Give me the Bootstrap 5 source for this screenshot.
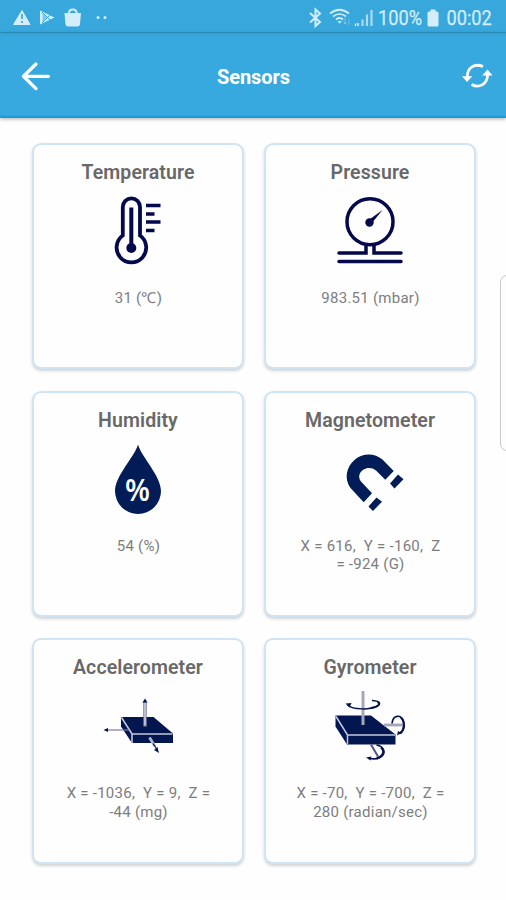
<!DOCTYPE html>
<html lang="en">
<head>
<meta charset="utf-8">
<meta name="viewport" content="width=device-width, initial-scale=1">
<title>Sensors</title>
<link href="https://cdn.jsdelivr.net/npm/bootstrap@5.3.0/dist/css/bootstrap.min.css" rel="stylesheet">
<style>
  body { font-family: Roboto, "Liberation Sans", sans-serif; background: #fefefe; width: 506px; height: 900px; }
  svg { display: block; flex: none; }
  .status-bar { height: 33px; background: #38a7dc; color: #d3edfa; padding: 2px 14px 0 12px; border-bottom: 1px solid #2f93c4; }
  .status-text { font-size: 20px; line-height: 32px; padding-top: 1px; -webkit-text-stroke: .25px #d3edfa; }
  .status-text span { display: inline-block; transform: scaleX(.91); }
  .scale-start { width: 46px; }
  .scale-start span { transform-origin: left; }
  .scale-end { width: 51px; }
  .scale-end span { transform-origin: right; }
  .app-bar { height: 85px; background: linear-gradient(#349fd2 0, #38a9de 4px, #38a9de 82px, #179bd6 84px); box-shadow: 0 1px 4px rgba(0,0,0,.32); padding: 0 13px 0 20px; }
  .app-title { font-size: 20px; font-weight: 700; color: #fff; letter-spacing: -.1px; padding: 2px 6px 0 0; }
  .sensor-grid { display: grid; grid-template-columns: 212px 212px; grid-auto-rows: 226px; column-gap: 20px; row-gap: 21.5px; padding: 25px 0 0 32px; }
  .sensor-card { border: 2.5px solid #cfe5f5; border-radius: 9px; box-shadow: 0 2px 3px rgba(70,80,90,.25); background: #fefefe; padding-top: 16px; }
  .sensor-name { font-size: 19.5px; line-height: 24px; font-weight: 600; letter-spacing: .1px; color: #686868; margin: 0 0 4px; }
  .sensor-value { font-size: 15px; line-height: 18.5px; letter-spacing: .25px; color: #7d7d7d; margin-top: 20px; padding-left: 1px; white-space: pre; }
  .edge-handle { top: 275px; left: 500px; width: 20px; height: 176px; border: 1.500px solid #c9c9c9; border-radius: 7px; background: #fdfdfd; }
</style>
</head>
<body class="position-relative overflow-hidden">
  <div class="status-bar d-flex align-items-center justify-content-between">
    <svg width="100" height="30" viewBox="12 2 100 30" fill="#d3edfa">
      <path d="M22 10.5 30 24.5H13.5Z" stroke="#d3edfa" stroke-linejoin="round"/><path d="M22 14v5M22 21v2" stroke="#38a7dc" stroke-width="1.7"/>
      <path d="M40 10.500v14l14.500-7Z"/><path d="M42.500 13v9L48 17.500Z" fill="#38a7dc" opacity=".5"/><path d="M42 12l8.500 8.500M42 23l8.500-8.500" stroke="#38a7dc" stroke-width="1" fill="none"/>
      <path d="M64.500 13h16.500l-1 11q-.3 2.500-2.500 2.500H68q-2.300 0-2.600-2.500Z"/><path d="M68.800 14q0-4.500 4-4.500t4 4.500" fill="none" stroke="#d3edfa" stroke-width="1.800"/>
      <circle cx="98" cy="17.500" r="1.500"/><circle cx="105" cy="17.500" r="1.500"/>
    </svg>
    <div class="d-flex align-items-center">
      <svg width="70" height="30" viewBox="309 2 70 30" fill="none" stroke="#d3edfa" stroke-width="1.700">
        <path d="m311 13 10 9-4.500 4V9.500l4.500 4-10 9" stroke-width="2"/>
        <path d="M331 13.500q9.500-7.500 19 0M334 16.500q6.500-5 13 0M337 19.500q3.500-3 7 0"/><path d="m338.500 21 2.300 2.800 2-2.800Z" fill="#d3edfa" stroke="none"/>
        <path d="M346 18v6m-1.500-2 1.500 2 1.500-2M350 25v-6" stroke-width="1" opacity=".4"/>
        <path d="M359 26v-3M363.500 26v-6.500M368 26V14.500M372.500 26V10" stroke-width="2.200" opacity=".75"/><path d="M356.500 23.500v2.500" stroke-width="1.500"/>
      </svg>
      <div class="status-text scale-start"><span>100%</span></div>
      <svg width="17" height="30" viewBox="425.500 2 17 30" fill="#d3edfa"><path d="M432 9.500h5v2h1.500q1.500 0 1.500 1.500v12q0 1.500-1.500 1.500h-8Q429 26.500 429 25V13q0-1.500 1.500-1.500H432Z"/></svg>
      <div class="status-text scale-end text-end"><span>00:02</span></div>
    </div>
  </div>
  <header class="app-bar d-flex align-items-center justify-content-between">
    <svg width="32" height="32" viewBox="20 60 32 32" fill="none" stroke="#fff" stroke-width="3.300" stroke-linecap="round" stroke-linejoin="round"><path d="M48.500 76.300H23.500M36 64 23.500 76.300 36 88.600"/></svg>
    <div class="app-title">Sensors</div>
    <svg width="32" height="32" viewBox="461 60 32 32" fill="none" stroke="#fff" stroke-width="2.800"><path d="M483 66.500C475 63 467 67.500 467.300 77M471.500 84.500C479.500 89 487.500 83.500 487.500 75"/><path d="M462 76.200h10.300L467 82Z M482.200 75.500H492.500L487.500 69.500Z" fill="#fff" stroke="none"/></svg>
  </header>

  <main class="sensor-grid">
    <section class="sensor-card d-flex flex-column align-items-center">
      <h2 class="sensor-name">Temperature</h2>
      <svg width="100" height="80" viewBox="88.500 189.500 100 80" fill="none" stroke="#03094a">
        <path d="M123.300 236V207.500a8.600 8.600 0 0 1 17.200 0V236a14.800 14.800 0 1 1-17.200 0Z" stroke-width="3.800"/>
        <path d="M131.800 208v38" stroke-width="4"/><circle cx="131.800" cy="248.500" r="5" fill="#03094a" stroke="none"/>
        <path d="M146.500 206h14.500M146.500 214.500h8.500M146.500 222.500h14.500M146.500 231h8.500" stroke-width="3.500"/>
      </svg>
      <div class="sensor-value text-center">31 (℃)</div>
    </section>
    <section class="sensor-card d-flex flex-column align-items-center">
      <h2 class="sensor-name">Pressure</h2>
      <svg width="100" height="80" viewBox="320 189.500 100 80" fill="none" stroke="#03094a" stroke-width="3.500" stroke-linecap="round">
        <circle cx="370" cy="222.300" r="23"/><circle cx="369.500" cy="223" r="4.200" fill="#03094a" stroke="none"/><path d="m368 221 14.500-10.500L371.500 224Z" fill="#03094a" stroke="none"/>
        <path d="M339 253.500h27v-8M401 253.500H374v-8M339 262h62"/>
      </svg>
      <div class="sensor-value text-center">983.51 (mbar)</div>
    </section>
    <section class="sensor-card d-flex flex-column align-items-center">
      <h2 class="sensor-name">Humidity</h2>
      <svg width="100" height="80" viewBox="88.500 437 100 80">
        <path d="M138.500 444.500C142 457 161.500 476 161.500 491a23 23 0 0 1-46 0C115.500 476 135 457 138.500 444.500Z" fill="#021c58"/>
        <text x="138" y="501" text-anchor="middle" font-size="30.500" font-weight="600" fill="#fff" font-family="Open Sans, sans-serif" textLength="25" lengthAdjust="spacingAndGlyphs">%</text>
      </svg>
      <div class="sensor-value text-center">54 (%)</div>
    </section>
    <section class="sensor-card d-flex flex-column align-items-center">
      <h2 class="sensor-name">Magnetometer</h2>
      <svg width="100" height="80" viewBox="320 437 100 80" fill="#021c58">
        <path d="M393.700 471 382.500 459.500C375 453 363 452.500 355 459.500 346 467 344 479 350.500 488L363.700 502.300 372 493.300 361 481.500C354.500 472 368 463.500 376 470.500L385.300 479.700Z"/>
        <path d="m398 474.500 5.500 4.700-9 9.300-4.500-5ZM376.500 497.500l5.500 4.200-9 9.300-4.500-4.500Z"/>
      </svg>
      <div class="sensor-value text-center">X = 616,  Y = -160,  Z
= -924 (G)</div>
    </section>
    <section class="sensor-card d-flex flex-column align-items-center">
      <h2 class="sensor-name">Accelerometer</h2>
      <svg width="100" height="80" viewBox="88 684.500 100 80">
        <path d="M121 717.500H153.500L173 734V743.500H132L121 727Z" fill="#021650"/>
        <path d="M121.500 718 132 734.500H172.500M132 734.500V743.500" fill="none" stroke="#c5c8dc" stroke-width="1.600"/>
        <path d="M106 730.500H129" stroke="#777b98" stroke-width="1.200"/>
        <path d="M145 702V727" stroke="#777b98" stroke-width="3.500"/><path d="M145 703V726" stroke="#d3d5e3" stroke-width="1.500"/>
        <path d="M149.500 738 155 747" stroke="#b2b5ce" stroke-width="2.800"/><path d="m153 744 4 6" stroke="#021650" stroke-width="1.200"/>
        <path d="m145 699 2.500 4h-5ZM103.500 730.500l4.500-2v4ZM159 753.500l-5-3 3.500-3Z" fill="#021650"/>
      </svg>
      <div class="sensor-value text-center">X = -1036,  Y = 9,  Z =
-44 (mg)</div>
    </section>
    <section class="sensor-card d-flex flex-column align-items-center">
      <h2 class="sensor-name">Gyrometer</h2>
      <svg width="100" height="80" viewBox="320 684.500 100 80" fill="none">
        <path d="M335.500 716H371L395.500 735V745H347L335.500 727Z" fill="#021650"/>
        <path d="M336 717 347.500 735.500H395M347.500 735.500V744.500" stroke="#c5c8dc" stroke-width="1.500"/>
        <path d="M363 691.500V725.500" stroke="#a4a6b9" stroke-width="3"/><path d="M384 725.500H403" stroke="#a4a6b9" stroke-width="2.800"/><path d="m371 745 7 12" stroke="#4e5680" stroke-width="2"/>
        <g stroke="#07144b"><path d="M347.500 705.500C353 710.500 370 710.500 377.500 706.500 382 703.500 379 701.500 372 701" stroke-width="1.500"/><path d="M371 708.500C378 707.500 381 704.500 377.500 702.500" stroke-width="2"/>
        <path d="M392 724C393 715 401 714.500 403.500 722 405.500 728 402.500 733 399.500 734" stroke-width="1.700"/><path d="M401 718C405.500 723 404.500 730 400 734" stroke-width="2"/>
        <path d="M376.500 745.500C385 747 386.500 755 379.500 758 376 760 372 759.500 369 758.500" stroke-width="1.600"/><path d="M381 748C385.500 752 383 757 376.500 759" stroke-width="2.200"/></g>
        <path d="m345.500 704 6-.5-2 4.500ZM397 736l1-4.500 3.500 2ZM366 758l5.500-1-1 4Z" fill="#07144b"/>
      </svg>
      <div class="sensor-value text-center">X = -70,  Y = -700,  Z =
280 (radian/sec)</div>
    </section>
  </main>
  <div class="edge-handle position-absolute"></div>
<script src="https://cdn.jsdelivr.net/npm/bootstrap@5.3.0/dist/js/bootstrap.bundle.min.js"></script>
</body>
</html>
